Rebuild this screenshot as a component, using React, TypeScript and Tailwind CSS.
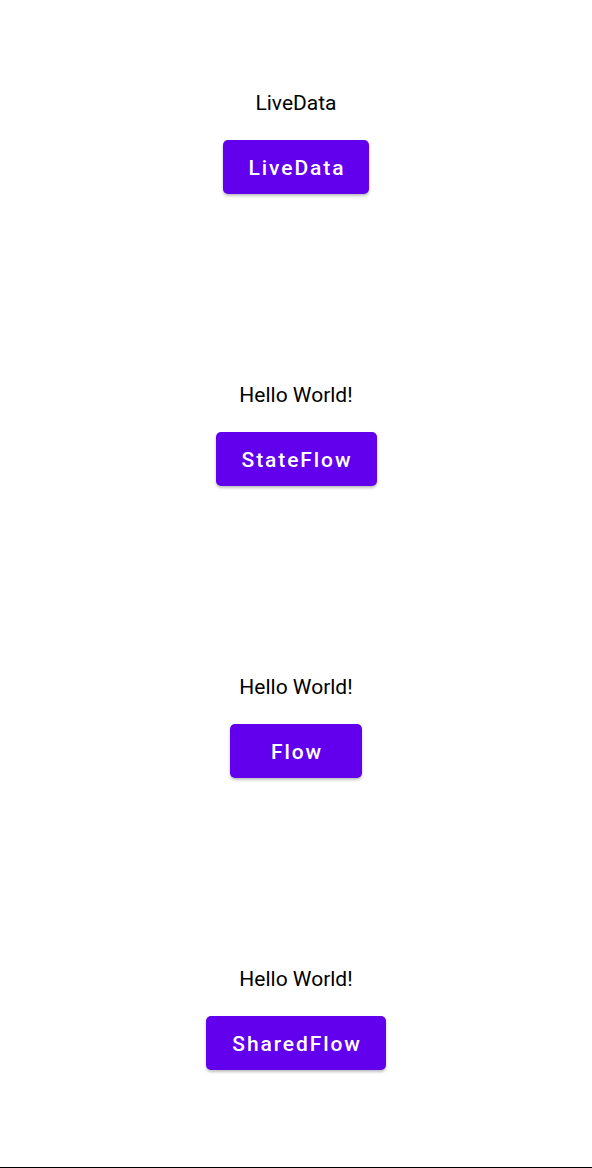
const sections = [
  { label: "LiveData", button: "LiveData", width: "w-[146px]" },
  { label: "Hello World!", button: "StateFlow", width: "w-[161px]" },
  { label: "Hello World!", button: "Flow", width: "w-[132px]" },
  { label: "Hello World!", button: "SharedFlow", width: "w-[180px]" },
];

export default function App() {
  return (
    <div
      className="w-[592px] h-[1168px] bg-white flex flex-col border-b border-black box-border"
      style={{ fontFamily: "Roboto, 'Noto Sans', sans-serif" }}
    >
      {sections.map((s, i) => (
        <div key={i} className="h-[292px] shrink-0 flex flex-col items-center pt-[91px]">
          <p className="text-[21px] leading-[25px] text-black">{s.label}</p>
          <button
            className={`${s.width} mt-[24px] h-[54px] pt-[4px] pl-[2px] rounded-[5px] bg-[#6200ee] text-white text-[21px] font-medium tracking-[1.9px] shadow-[0_2px_3px_rgba(0,0,0,0.25)] flex items-center justify-center`}
          >
            {s.button}
          </button>
        </div>
      ))}
    </div>
  );
}
